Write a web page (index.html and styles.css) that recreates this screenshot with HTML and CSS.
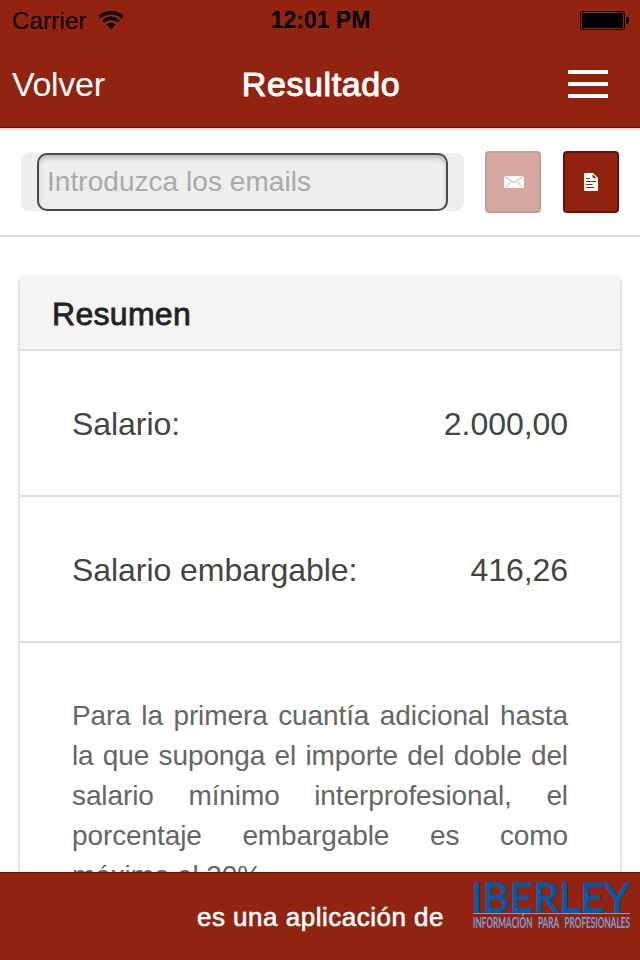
FILE: index.html
```html
<!DOCTYPE html>
<html lang="es">

<head>
    <meta charset="utf-8">
    <title>Resultado</title>
    <link rel="stylesheet" href="styles.css">
</head>

<body>
    <header class="top">
        <div class="status">
            <div class="carrier">
                <span class="carrier-name">Carrier</span>
                <svg class="wifi" width="26" height="18" viewBox="0 0 26 18">
                    <path d="M1.500 6Q13 -2.800 24.500 6" fill="none" stroke="#000" stroke-width="3.200" />
                    <path d="M5.300 10.300Q13 3.900 20.700 10.300" fill="none" stroke="#000" stroke-width="3" />
                    <path d="M8.600 13.600Q13 9.900 17.400 13.600L13 18z" />
                </svg>
            </div>
            <span class="clock">12:01 PM</span>
            <svg class="battery" width="49" height="19" viewBox="0 0 49 19">
                <rect x=".5" y=".5" width="44" height="18" rx="2.500" fill="none" stroke="#000" />
                <rect x="2" y="2" width="41" height="15" rx="1.500" />
                <path d="M46 6h1.500q1.500 0 1.500 2v3q0 2-1.500 2H46z" />
            </svg>
        </div>
        <nav class="navbar">
            <a class="back">Volver</a>
            <h1 class="title">Resultado</h1>
            <div class="menu">
                <span></span>
                <span></span>
                <span></span>
            </div>
        </nav>
    </header>

    <form class="send-bar">
        <div class="input-wrap">
            <input class="emails" type="text" placeholder="Introduzca los emails">
        </div>
        <button class="btn btn-mail" type="button" disabled>
            <svg width="20" height="12" viewBox="0 0 20 12">
                <rect width="20" height="12" rx=".8" fill="#fff" />
                <path d="M.5 .5L8.500 5.700Q10 6.700 11.500 5.700L19.500 .5M1.800 11L7 5.500M18.200 11L13 5.500" fill="none" stroke="#d4a79f" />
            </svg>
        </button>
        <button class="btn" type="button">
            <svg width="14" height="18" viewBox="0 0 14 18">
                <path d="M1 0H9L14 5V17q0 1-1 1H1q-1 0-1-1V1q0-1 1-1z" fill="#fff" />
                <path d="M8.200 2.500L9.500 2L12 4.500L11.500 5.400Q8.300 5.300 8.200 2.500z" fill="#92230f" />
                <path d="M2 5.500H6M2 8.500H12M2 11.500H8.500M2 14.500H10" stroke="#92230f" />
            </svg>
        </button>
    </form>

    <main class="card">
        <h2 class="card-header">Resumen</h2>
        <div class="row">
            <span>Salario:</span>
            <span>2.000,00</span>
        </div>
        <div class="row">
            <span>Salario embargable:</span>
            <span>416,26</span>
        </div>
        <p class="info">Para la primera cuantía adicional hasta la que suponga el importe del doble del salario mínimo interprofesional, el porcentaje embargable es como máximo el 30%</p>
    </main>

    <footer class="footer">
        <span class="footer-text">es una aplicación de</span>
        <svg class="logo" width="160" height="52" viewBox="0 0 160 52">
            <text class="logo-name" x="-1" y="30.500" textLength="159" lengthAdjust="spacingAndGlyphs">IBERLEY</text>
            <path d="M1 32.500H158" stroke="#789fd4" />
            <text class="logo-sub" x="1" y="46.500" textLength="157" lengthAdjust="spacingAndGlyphs">INFORMACIÓN PARA PROFESIONALES</text>
        </svg>
    </footer>
</body>

</html>
```

FILE: styles.css
```css
* {
    box-sizing: border-box;
}

body {
    margin: 0;
    height: 960px;
    overflow: hidden;
    display: flex;
    flex-direction: column;
    background-color: #fff;
    font-family: "Liberation Sans", Arial, sans-serif;
}

.top {
    flex: none;
    height: 128px;
    background-color: #92230f;
    border-bottom: 1px solid #641509;
}

.status {
    display: grid;
    grid-template-columns: 1fr auto 1fr;
    align-items: center;
    height: 40px;
    padding: 1px 11px 0 12px;
    font-size: 24px;
}

.carrier {
    display: flex;
    align-items: center;
    gap: 11px;
}

.carrier-name {
    letter-spacing: 0.2px;
}

.wifi {
    margin-top: -2px;
}

.clock {
    font-weight: bold;
    font-size: 23px;
}

.battery {
    justify-self: end;
}

.navbar {
    display: grid;
    grid-template-columns: 1fr auto 1fr;
    align-items: center;
    height: 88px;
    padding: 0 32px 0 12px;
    color: #fff;
    font-size: 34px;
}

.back {
    letter-spacing: -0.3px;
}

.title {
    margin: 0 0 0 22px;
    font-size: 34px;
    font-weight: normal;
    letter-spacing: 0.6px;
    -webkit-text-stroke: 1px #fff;
}

.menu {
    justify-self: end;
    display: flex;
    flex-direction: column;
    gap: 8px;
}

.menu span {
    width: 40px;
    height: 4px;
    background-color: #fff;
}

.send-bar {
    flex: none;
    display: flex;
    align-items: center;
    height: 109px;
    padding: 0 21px 2px;
    border-top: 2px solid #ddd;
    border-bottom: 2px solid #ddd;
}

.input-wrap {
    width: 443px;
    height: 58px;
    margin-right: 21px;
    padding: 0 16px;
    border-radius: 8px;
    background-color: #eee;
}

.emails {
    display: block;
    width: 100%;
    height: 58px;
    padding: 0 8px;
    border: 2px solid #4a4a4a;
    border-radius: 10px;
    background-color: #eee;
    box-shadow: inset 0 4px 5px -1px #bbb;
    font-family: inherit;
    font-size: 28px;
    letter-spacing: 0.05px;
}

.emails::placeholder {
    color: #aaa;
    opacity: 1;
}

.btn {
    display: flex;
    align-items: center;
    justify-content: center;
    width: 56px;
    height: 62px;
    padding: 0;
    border: 2px solid #641509;
    border-radius: 4px;
    background-color: #92230f;
}

.btn-mail {
    margin-right: 22px;
    padding-left: 2px;
    border-color: #c1a09a;
    background-color: #d4a79f;
}

.card {
    flex: 1;
    min-height: 0;
    overflow: hidden;
    margin: 39px 20px 0;
    border-radius: 4px 4px 0 0;
    box-shadow: 0 2px 4px rgba(0, 0, 0, 0.3);
}

.card-header {
    margin: 0;
    height: 75px;
    padding: 0 32px;
    border-bottom: 2px solid #ddd;
    background-color: #f4f4f4;
    color: #222;
    font-size: 32px;
    font-weight: normal;
    line-height: 76px;
    letter-spacing: 0.3px;
    -webkit-text-stroke: 0.8px #222;
}

.row {
    display: flex;
    justify-content: space-between;
    height: 146px;
    padding: 0 52px;
    border-bottom: 2px solid #ddd;
    color: #444;
    font-size: 32px;
    line-height: 146px;
    letter-spacing: -0.05px;
}

.info {
    margin: 0;
    padding: 53px 52px;
    color: #666;
    font-size: 28px;
    line-height: 40px;
    letter-spacing: -0.1px;
    text-align: justify;
}

.footer {
    flex: none;
    display: flex;
    justify-content: flex-end;
    height: 88px;
    padding-right: 8px;
    border-top: 1px solid #641509;
    background-color: #92230f;
    color: #fff;
    z-index: 1;
}

.footer-text {
    margin-right: 28px;
    font-size: 26px;
    line-height: 88px;
    letter-spacing: 0.5px;
    -webkit-text-stroke: 0.6px #fff;
}

.logo {
    margin-top: 8px;
}

.logo-name {
    fill: #005ca8;
    stroke: #005ca8;
    stroke-width: 1px;
    font-family: Lato, sans-serif;
    font-size: 40px;
}

.logo-sub {
    fill: #789fd4;
    font-family: Lato, sans-serif;
    font-size: 14.5px;
    font-weight: bold;
    word-spacing: 6px;
}
```
